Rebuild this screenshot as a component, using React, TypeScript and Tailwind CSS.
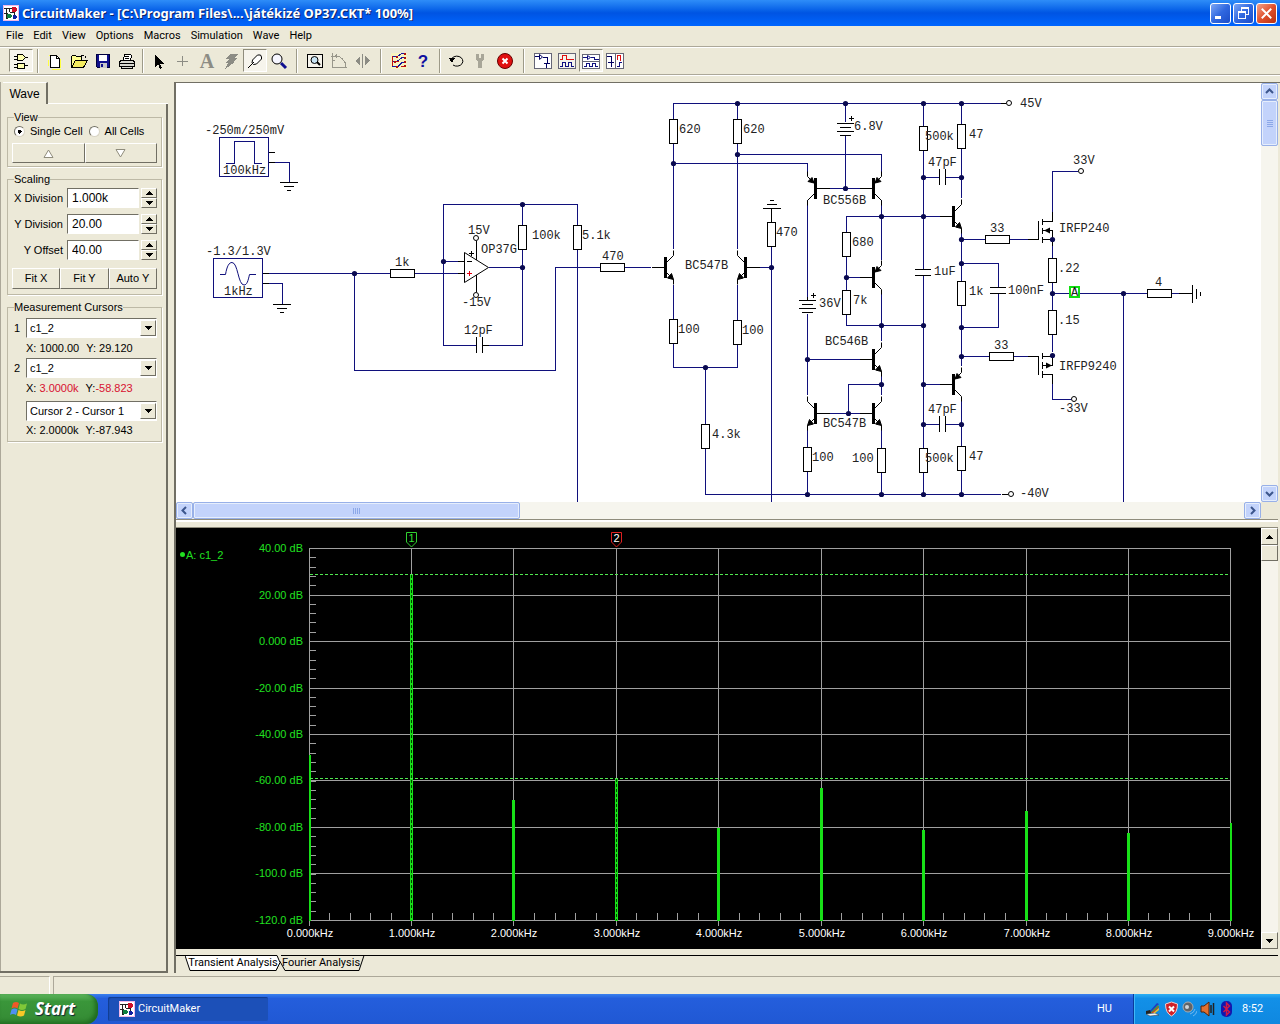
import { useState } from 'react';
import type { ReactNode } from 'react';
import clsx from 'clsx';

const UI_FONT = "font-['Liberation_Sans',Arial,sans-serif]";
const MENU_FONT = "font-['Roboto','Noto_Sans',sans-serif]";

const MENU = ['File', 'Edit', 'View', 'Options', 'Macros', 'Simulation', 'Wave', 'Help'];

function AppIcon() {
  return (
    <svg width="16" height="16" viewBox="0 0 16 16" shapeRendering="crispEdges" aria-hidden="true">
      <rect width="16" height="16" fill="#f0b8e8" />
      <rect x="1" y="1" width="14" height="14" fill="#fff" />
      <path d="M1 3.500h8M3.500 3v10M1 8.500h4M6.500 4v3M3 13.500h2" stroke="#222" fill="none" />
      <path d="M9 2h4v1h1v3h-1v1H9z" fill="#d0102a" />
      <path d="M4 9h4v1h1v2H8v1H4z" fill="#108040" />
      <path d="M10 10h3v1h1v2h-1v1h-3z" fill="#1020a0" />
      <path d="M11.500 7v3M7 7.500h4" stroke="#222" />
    </svg>
  );
}

function TitleBar() {
  return (
    <header className="flex h-[26px] items-center bg-gradient-to-b from-[#2e8df8] via-[#0054e3] to-[#0066ff] px-[3px]">
      <AppIcon />
      <h1 className="ml-[3px] flex-1 truncate font-['Noto_Sans','Open_Sans',sans-serif] text-[13px] leading-4 font-bold text-white [text-shadow:1px_1px_0_#0a246a]">
        CircuitMaker - [C:\Program Files\...\játékizé OP37.CKT* 100%]
      </h1>
      <div className="flex gap-[2px]">
        <CaptionButton label="Minimize">
          <path d="M4 13h7v3H4z" fill="#fff" />
        </CaptionButton>
        <CaptionButton label="Restore">
          <path d="M7.500 8V4.500h8v7H13M4.500 8.500h8v7h-8z" stroke="#fff" fill="none" />
          <path d="M7 4.500h9M4 8.500h9" stroke="#fff" strokeWidth="2" />
        </CaptionButton>
        <CaptionButton label="Close" close>
          <path d="M5 5l10 10M15 5L5 15" stroke="#fff" strokeWidth="2" shapeRendering="auto" />
        </CaptionButton>
      </div>
    </header>
  );
}

function CaptionButton({ label, close, children }: { label: string; close?: boolean; children: ReactNode }) {
  return (
    <button
      aria-label={label}
      className={clsx(
        'h-[21px] w-[21px] rounded-[3px] border border-white bg-gradient-to-br',
        close ? 'from-[#f0a088] via-[#e0502c] to-[#b83010]' : 'from-[#7da6f4] via-[#3068e0] to-[#1c4cc8]'
      )}
    >
      <svg viewBox="0 0 20 20" className="h-full w-full" shapeRendering="crispEdges">
        {children}
      </svg>
    </button>
  );
}

function ToolButton({ label, pressed, children }: { label: string; pressed?: boolean; children: ReactNode }) {
  return (
    <button
      aria-label={label}
      title={label}
      className={clsx(
        'flex h-[23px] w-6 items-center justify-center border',
        pressed ? 'border-t-[#8f8c7c] border-l-[#8f8c7c] border-r-white border-b-white bg-[#f6f4ec]' : 'border-transparent'
      )}
    >
      <svg width="18" height="18" viewBox="0 0 18 18" fill="none" stroke="#000" shapeRendering="crispEdges">
        {children}
      </svg>
    </button>
  );
}

function Separator({ className }: { className: string }) {
  return <div className={clsx('h-6 w-[2px] border-l border-[#9d9a88] bg-white', className)} />;
}

function Toolbar() {
  return (
    <div role="toolbar" className="flex h-[29px] items-center border-y border-[#aca899] pl-[9px] shadow-[inset_0_1px_0_#fff,0_1px_0_#fff]">
      <ToolButton label="Digital options" pressed>
        <path d="M5.500 2.500h5l3 3-3 3h-5zM5.500 11.500h7v5h-7z" fill="#ffffb0" />
        <path d="M2 4.500h3M2 7.500h3M13 5.500h3M2 12.500h3M2 15.500h3M13 13.500h3" />
      </ToolButton>
      <Separator className="mx-1" />
      <ToolButton label="New">
        <path d="M3 3h3M2 8v6M14 7v9M6 17h9" stroke="#ffff40" />
        <path d="M4.500 3.500h6l3 3v9h-9z" fill="#fff" />
        <path d="M10.500 3.500v3h3" />
      </ToolButton>
      <ToolButton label="Open">
        <path d="M1.500 15.500v-11l1-1h3l1 1h5v3" fill="#ffff90" />
        <path d="M1.500 15.500l4-7h12l-4 7z" fill="#f4ec60" />
        <path d="M11 3.500h3M15.500 4v2" />
      </ToolButton>
      <ToolButton label="Save">
        <path d="M2.500 2.500h13v13h-12l-1-1z" fill="#10108c" stroke="#000040" />
        <path d="M5 3h8v6H5z" fill="#fff" stroke="none" />
        <path d="M6 11h7v5H6z" fill="#c8c8c8" stroke="none" />
        <path d="M7 12h2v3H7z" fill="#10108c" stroke="none" />
      </ToolButton>
      <ToolButton label="Print">
        <path d="M5.500 8.500l1-6h6l1 1-1 5z" fill="#fff" />
        <path d="M1.500 9.500l2-1h11l2 1v5h-15zM3.500 14.500h11v2h-11z" fill="#d8d8d0" />
        <path d="M2 11.500h14M7 4.500h4M7 6.500h4" />
      </ToolButton>
      <Separator className="mx-[3px]" />
      <ToolButton label="Arrow">
        <path d="M5 2v13l3-3 2 5 2-1-2-4h4z" fill="#000" stroke="none" />
      </ToolButton>
      <ToolButton label="Wire">
        <path d="M8.500 4v10M3 9.500h11" stroke="#8c8c84" />
      </ToolButton>
      <button
        aria-label="Text"
        title="Text"
        className="flex h-[23px] w-6 items-center justify-center font-['Liberation_Serif',serif] text-[20px] leading-[22px] font-bold text-[#8c8c84]"
      >
        A
      </button>
      <ToolButton label="Delete">
        <path d="M8 2h8l-4 4h3l-4 4h2l-10 7 3-6H4l3-4H4z" fill="#8c8c84" stroke="none" />
      </ToolButton>
      <ToolButton label="Probe" pressed>
        <path d="M2 16l6-6M6.500 8l5-5h3l1 2v2l-5 5-3 .5-1.500-1.500z" shapeRendering="auto" fill="#fff" />
      </ToolButton>
      <ToolButton label="Zoom">
        <circle cx="7" cy="7" r="5" fill="#f6f6ff" shapeRendering="auto" />
        <path d="M11 11l5 5" stroke="#101090" strokeWidth="3" shapeRendering="auto" />
      </ToolButton>
      <Separator className="mx-[5px]" />
      <ToolButton label="Fit">
        <path d="M1.500 2.500h15v13h-15z" fill="#f6f4ec" />
        <circle cx="8.500" cy="8" r="3.500" fill="#c8e4f4" shapeRendering="auto" />
        <path d="M11 10l3 3" strokeWidth="2" shapeRendering="auto" />
      </ToolButton>
      <ToolButton label="Rotate">
        <path d="M2.500 1v14.500H17M1 4.500h4M5 8.500H2M6 4.500h3l3 2 3 4v5" stroke="#98968a" />
        <path d="M7 1v6L4 4z" fill="#98968a" stroke="none" />
      </ToolButton>
      <ToolButton label="Mirror">
        <path d="M8.500 2v14" stroke="#8c8c84" />
        <path d="M6 4v9L1 9zM11 4v9l5-4z" fill="#8c8c84" stroke="none" />
      </ToolButton>
      <Separator className="mx-[5px]" />
      <ToolButton label="Check wiring">
        <path d="M1 1h16v16H1z" fill="#f8f4c0" stroke="none" />
        <path d="M2 4.500h5l5-3h4M2 9.500h5l5-4h4M2 14.500h6l4-4h4" stroke="#1818a0" />
        <path d="M2.500 4v10M6 9.500h3M11 14.500h5" stroke="#c01010" />
        <path d="M14 1h2v2h-2zM14 5h2v2h-2zM14 9h2v2h-2zM14 13h2v2h-2zM6 4h2v2H6zM4 9h2v2H4zM6 14h2v2H6z" fill="#b01010" stroke="none" />
      </ToolButton>
      <ToolButton label="Help">
        <text x="9" y="15" textAnchor="middle" fontSize="17" fontWeight="bold" fill="#1010a0" stroke="none" className="font-['Liberation_Sans',sans-serif]">?</text>
      </ToolButton>
      <Separator className="mx-1" />
      <ToolButton label="Reset">
        <path d="M3 8a6 5 0 1 1 2 5" shapeRendering="auto" />
        <path d="M1 6h6l-3 5z" fill="#000" stroke="none" />
      </ToolButton>
      <ToolButton label="Step">
        <path d="M4 2h3v4h2V2h3v5l-2 3v6H6v-6L4 7z" fill="#a8a698" stroke="none" />
      </ToolButton>
      <ToolButton label="Stop">
        <circle cx="9" cy="9" r="7.500" fill="#e01010" stroke="#600" shapeRendering="auto" />
        <path d="M6.500 6.500l5 5M11.500 6.500l-5 5" stroke="#fff" strokeWidth="2" shapeRendering="auto" />
      </ToolButton>
      <Separator className="mx-[6px]" />
      <ToolButton label="Schematic only">
        <path d="M.5 1.500h17v15H.5z" fill="#fff" stroke="#667" />
        <path d="M1 4.500h5M9 5.500h4v5M10 11.500h6M12.500 12v4" stroke="#000060" />
        <path d="M5.500 2.500v5l3-2.500z" stroke="#000060" shapeRendering="auto" />
      </ToolButton>
      <ToolButton label="Waveforms only">
        <path d="M.5 1.500h17v15H.5z" fill="#f4f4ec" stroke="#667" />
        <path d="M2 7.500h2.500v-4h4v4H16" stroke="#e01010" />
        <path d="M2 14.500h2.500v-4h3v4h3v-4h3v4H16" stroke="#101080" />
      </ToolButton>
      <ToolButton label="Split horizontally" pressed>
        <path d="M.5 2.500h17v14H.5zM1 9.500h16" fill="#fff" stroke="#667" />
        <path d="M1 5.500h5M9 5.500h3.500v2H17M2 14.500h2.500v-3h3v3h3v-3h3v3H16" stroke="#101080" />
        <path d="M5.500 3.500v4l3-2z" stroke="#101080" shapeRendering="auto" />
      </ToolButton>
      <ToolButton label="Split vertically">
        <path d="M.5 1.500h17v15H.5zM9.500 2v14" fill="#fff" stroke="#667" />
        <path d="M1 4.500h4.500v5M2 10.500h6M5.500 11v4" stroke="#000060" />
        <path d="M11 7.500h.5v-4h3v5" stroke="#e01010" />
        <path d="M11 14.500h2.500v-4H16" stroke="#101080" />
      </ToolButton>
    </div>
  );
}

const RAISED = 'border border-t-white border-l-white border-r-[#716f64] border-b-[#716f64] bg-[#ece9d8]';
const SUNKEN = 'border-t border-l border-r border-b border-t-[#716f64] border-l-[#716f64] border-r-white border-b-white bg-white';

function Group({ title, children }: { title: string; children: ReactNode }) {
  return (
    <fieldset className="mr-1 mb-[6px] ml-[7px] min-w-0 border border-[#bdb9a6] px-1 shadow-[1px_1px_0_#fff]">
      <legend className="ml-[2px] leading-3">{title}</legend>
      {children}
    </fieldset>
  );
}

function Arrow({ up }: { up?: boolean }) {
  return (
    <svg width="7" height="4" viewBox="0 0 7 4" shapeRendering="crispEdges" aria-hidden="true">
      <path d={up ? 'M3 0h1l3 4H0z' : 'M0 0h7L4 4H3z'} />
    </svg>
  );
}

function NumberRow({ id, label, value }: { id: string; label: string; value: string }) {
  return (
    <div className="mb-[6px] flex h-5 items-center">
      <label htmlFor={id} className="w-[55px] shrink-0 pr-1 text-right whitespace-nowrap">
        {label}
      </label>
      <input id={id} defaultValue={value} className={clsx('h-5 w-0 min-w-0 flex-1 pl-1 text-[12px]', SUNKEN)} />
      <div className="ml-[2px] flex w-4 shrink-0 flex-col">
        <button aria-label={`${label} up`} className={clsx('flex h-[10px] items-center justify-center', RAISED)}>
          <Arrow up />
        </button>
        <button aria-label={`${label} down`} className={clsx('flex h-[10px] items-center justify-center', RAISED)}>
          <Arrow />
        </button>
      </div>
    </div>
  );
}

function CursorSelect({ label, options }: { label: string; options: string[] }) {
  return (
    <div className="relative ml-[14px]">
      <select aria-label={label} className={clsx('block h-5 w-full appearance-none pl-[3px]', SUNKEN)}>
        {options.map((o) => (
          <option key={o}>{o}</option>
        ))}
      </select>
      <span className={clsx('pointer-events-none absolute top-[2px] right-[1px] flex h-4 w-4 items-center justify-center', RAISED)}>
        <Arrow />
      </span>
    </div>
  );
}

function WavePanel() {
  const [cell, setCell] = useState('single');
  return (
    <aside className="flex w-[168px] shrink-0 flex-col border-l border-[#aca899] text-[11px]">
      <div className="flex h-[22px] pl-[2px]">
        <button className="w-[45px] border-t border-r-2 border-t-white border-r-[#716f64] text-[12px]">Wave</button>
        <div className="flex-1 border-b border-white" />
      </div>
      <div className="-ml-px flex-1 border-r-2 border-b-2 border-[#716f64] pt-[7px]">
        <Group title="View">
          <div className="flex h-4 items-center">
            {[
              ['single', 'Single Cell'],
              ['all', 'All Cells'],
            ].map(([id, text]) => (
              <label key={id} className="mr-1 flex items-center gap-[5px] pl-[2px] whitespace-nowrap">
                <input
                  type="radio"
                  name="cell"
                  checked={cell === id}
                  onChange={() => setCell(id)}
                  className="h-[11px] w-[11px] appearance-none rounded-full border border-t-[#716f64] border-r-[#d8d4c4] border-b-[#d8d4c4] border-l-[#716f64] bg-white checked:bg-[radial-gradient(circle,#000_2px,#fff_2px)]"
                />
                {text}
              </label>
            ))}
          </div>
          <div className="mt-1 mb-[3px] flex h-5">
            <button aria-label="Previous cell" className={clsx('flex flex-1 items-center justify-center', RAISED)}>
              <svg width="11" height="9" viewBox="0 0 11 9" fill="#fff" stroke="#8f8c7c">
                <path d="M5.500 1l4.500 7.500H1z" />
              </svg>
            </button>
            <button aria-label="Next cell" className={clsx('flex flex-1 items-center justify-center', RAISED)}>
              <svg width="11" height="9" viewBox="0 0 11 9" fill="#fff" stroke="#8f8c7c">
                <path d="M5.500 8L1 .5h9z" />
              </svg>
            </button>
          </div>
        </Group>
        <Group title="Scaling">
          <div className="pt-[3px]">
            <NumberRow id="xdiv" label="X Division" value="1.000k" />
            <NumberRow id="ydiv" label="Y Division" value="20.00" />
            <NumberRow id="yoff" label="Y Offset" value="40.00" />
          </div>
          <div className="mt-2 mb-[5px] flex h-[21px]">
            {['Fit X', 'Fit Y', 'Auto Y'].map((t) => (
              <button key={t} className={clsx('flex-1', RAISED)}>
                {t}
              </button>
            ))}
          </div>
        </Group>
        <Group title="Measurement Cursors">
          <div className="relative pt-[5px]">
            <span className="absolute top-[7px] left-[2px]">1</span>
            <CursorSelect label="Cursor 1 trace" options={['c1_2']} />
            <p className="ml-[14px] flex h-5 items-center gap-[7px] whitespace-nowrap">
              <span>X: 1000.00</span>
              <span>Y: 29.120</span>
            </p>
          </div>
          <div className="relative">
            <span className="absolute top-[2px] left-[2px]">2</span>
            <CursorSelect label="Cursor 2 trace" options={['c1_2']} />
            <p className="ml-[14px] flex h-5 items-center gap-[7px] whitespace-nowrap">
              <span>
                X: <span className="text-[#d81030]">3.0000k</span>
              </span>
              <span>
                Y:<span className="text-[#d81030]">-58.823</span>
              </span>
            </p>
          </div>
          <div className="pt-[3px] pb-[2px]">
            <CursorSelect label="Difference" options={['Cursor 2 - Cursor 1', 'Cursor 1 - Cursor 2']} />
            <p className="ml-[14px] flex h-[18px] items-center gap-[7px] whitespace-nowrap">
              <span>X: 2.0000k</span>
              <span>Y:-87.943</span>
            </p>
          </div>
        </Group>
      </div>
    </aside>
  );
}

/* ---------- schematic ---------- */

const WIRES = [
  'M275 162.500H289.500V182',
  'M269 283.500H282.500V304',
  'M269 273.500H390M415 273.500H458',
  'M354.500 273.500V370.500H555.500V267.500H600',
  'M476 345.500H443.500V204.500H577.500V225M577.500 250V502',
  'M443.500 261.500H458M522.500 204.500V225M522.500 250V345.500H489M489 267.500H522.500',
  'M673.500 119V103.500H1002M737.500 103.500V119M845.500 103.500V122',
  'M673.500 144V249M737.500 144V249M673.500 163.500H807.500V176M737.500 154.500H881.500V176',
  'M625 267.500H651M752 267.500H771.500M771.500 247V502',
  'M673.500 285V319M737.500 285V320M673.500 344V367.500H737.500V345M705.500 367.500V424M705.500 449V494.500H1001',
  'M845.500 136V188.500M822 188.500H866M881.500 200V260M846.500 232V216.500H952M846.500 257V290M846.500 277.500H872M846.500 315V325.500H923.500',
  'M807.500 200V297M807.500 314V395M807.500 359.500H872M881.500 290V341M881.500 372V395M881.500 384.500H848.500V413.500M830 413.500H866',
  'M807.500 426V447M807.500 472V494M881.500 426V448M881.500 473V494',
  'M923.500 103V126M923.500 151V269M923.500 276V448M923.500 473V494',
  'M961.500 103V124M961.500 149V198M923.500 177.500H939M946 177.500H961',
  'M961.500 229V281M961.500 306V366M961.500 397V446M961.500 471V494',
  'M961.500 239.500H985M1010 239.500H1028M961.500 263.500H998.500V287M998.500 294V327.500H961.500',
  'M961.500 356.500H989M1014 356.500H1028M923.500 384.500H952M923.500 424.500H939M946 424.500H961',
  'M1052.500 212V171.500H1078M1052.500 244V258M1052.500 283V310M1052.500 335V352M1052.500 384V399.500H1071',
  'M1052.500 293.500H1147M1172 293.500H1179M1123.500 293.500V502',
].join('');

const LEADS = [
  'M269 152.500h6M269 162.500h6M280 182.500h18M284 186.500h10M287 190.500h4',
  'M262 273.500h7M262 283.500h7M273 304.500h18M277 308.500h10M280 312.500h4',
  'M458 261.500h6M458 273.500h6M476.500 241V260M476.500 275V292',
  'M476.500 337v16M482.500 337v16M483 345.500h6',
  'M763 208.500h18M767 204.500h10M770 200.500h4M771.500 208v14',
  'M837 123.500h17M840 127.500h11M837 131.500h17M840 135.500h11',
  'M799 300.500h17M802 304.500h11M799 308.500h17M802 312.500h11M807.500 297v3',
  'M939.500 169v16M945.500 169v16M939.500 416v16M945.500 416v16',
  'M915 269.500h16M915 275.500h16M990 287.500h16M990 293.500h16',
  'M1028 239.500h10.500V221M1042.500 219v6M1042.500 228v6M1042.500 237v6M1042 221.500h10.500V212M1043 230.500h9.500V239.500H1042M1052.500 240v6',
  'M1028 356.500h10.500V375M1042.500 353v6M1042.500 362v7M1042.500 371v7M1042 356.500h10.500V365.500H1043M1042 374.500h10.500V384',
  'M1179 293.500h13M1192.500 285v18M1196.500 289v10M1200.500 292v4',
  'M1001 103.500h5M1002 494.500h6',
  'M849 118.500h5M851.500 116v5M811 295.500h5M813.500 293v5M469 253.500h5M471.500 251v5M467 261.500h5',
].join('');

// top-left corners
const RES_V = [
  [518, 225], [573, 225], [669, 119], [733, 119], [767, 222], [669, 319], [733, 320], [701, 424], [842, 232],
  [842, 290], [803, 447], [877, 448], [919, 126], [957, 124], [957, 281], [919, 448], [957, 446], [1048, 258], [1048, 310],
];
const RES_H = [[390, 269], [600, 263], [985, 235], [989, 352], [1147, 289]];

const DOTS = [
  [354, 273], [443, 261], [522, 204], [522, 267], [737, 103], [845, 103], [923, 103], [961, 103], [673, 163],
  [737, 154], [771, 267], [705, 367], [845, 188], [881, 216], [846, 277], [881, 325], [923, 325], [807, 359],
  [881, 384], [848, 413], [923, 177], [961, 177], [923, 216], [961, 239], [961, 263], [961, 327], [961, 356],
  [923, 384], [923, 424], [961, 424], [807, 494], [881, 494], [923, 494], [961, 494], [1052, 239], [1052, 293],
  [1052, 355], [1123, 293],
];

const TERMINALS = [[475, 237], [475, 294], [1008, 102], [1010, 493], [1080, 170], [1073, 398]];

const LABELS: [number, number, string][] = [
  [205, 134, '-250m/250mV'], [223, 174, '100kHz'], [206, 255, '-1.3/1.3V'], [224, 295, '1kHz'], [395, 266, '1k'],
  [468, 234, '15V'], [462, 306, '-15V'], [481, 253, 'OP37G'], [532, 239, '100k'], [582, 239, '5.1k'], [464, 334, '12pF'],
  [602, 260, '470'], [679, 133, '620'], [743, 133, '620'], [776, 236, '470'], [685, 269, 'BC547B'], [678, 333, '100'],
  [742, 334, '100'], [712, 438, '4.3k'], [854, 130, '6.8V'], [823, 204, 'BC556B'], [852, 246, '680'], [853, 304, '7k'],
  [819, 307, '36V'], [825, 345, 'BC546B'], [823, 427, 'BC547B'], [812, 461, '100'], [852, 462, '100'], [925, 140, '500k'],
  [969, 138, '47'], [928, 166, '47pF'], [934, 275, '1uF'], [969, 295, '1k'], [1008, 294, '100nF'], [990, 232, '33'],
  [1059, 232, 'IRFP240'], [1058, 272, '.22'], [1058, 324, '.15'], [1155, 286, '4'], [1073, 164, '33V'], [1020, 107, '45V'],
  [994, 349, '33'], [1059, 370, 'IRFP9240'], [1059, 412, '-33V'], [928, 413, '47pF'], [925, 462, '500k'], [969, 460, '47'],
  [1020, 497, '-40V'],
];

// x is the collector/emitter column, side says where the base bar sits
function Transistor({ x, y, side, pnp }: { x: number; y: number; side: -1 | 1; pnp?: boolean }) {
  return (
    <g transform={`translate(${x + 0.5} ${y + 0.5}) scale(${side === -1 ? 1 : -1} 1)`} stroke="#000" fill="none">
      <path d="M-8 -10.500V10.500" strokeWidth="3" shapeRendering="crispEdges" />
      <path d="M-22 0H-9" shapeRendering="crispEdges" />
      <path d="M-7 -5L0 -12V-17M-7 5L0 12V17" />
      {pnp ? <path d="M-6.500 -5.500l2 -5.500 4 4z" fill="#000" /> : <path d="M0 12l-6 -1.500 4 -4.500z" fill="#000" />}
    </g>
  );
}

function Schematic() {
  return (
    <svg viewBox="176 83 1085 419" className="block h-auto w-full bg-white font-['Liberation_Mono',monospace]" fontSize="12" fill="none" role="img" aria-label="Amplifier schematic">
      <g shapeRendering="crispEdges">
        <path d={WIRES} stroke="#10107c" />
        <path d={LEADS} stroke="#000" />
        <path d="M219.500 137.500h49v39h-49zM226 163.500h8.500v-22h20v22H262M213.500 258.500h49v39h-49z" stroke="#10107c" />
        {RES_V.map(([x, y]) => (
          <rect key={`${x}-${y}`} x={x + 0.5} y={y + 0.5} width="8" height="24" fill="#fff" stroke="#000" />
        ))}
        {RES_H.map(([x, y]) => (
          <rect key={`${x}-${y}`} x={x + 0.5} y={y + 0.5} width="24" height="8" fill="#fff" stroke="#000" />
        ))}
        <path d="M467 273.500h5M469.500 271v5" stroke="#e00010" />
      </g>
      <path d="M220 274.500h5.500C227 266 229 262.500 232 262.500c6 0 6 22.500 12 22.500 3 0 4-4 5.500-10.500H256" stroke="#10107c" />
      <path d="M464.500 252.500v30l24-15z" stroke="#000" />
      <path d="M1044 230.500l6-3v6zM1052 365.500l-6-3v6z" fill="#000" />
      {DOTS.map(([x, y]) => (
        <circle key={`${x}-${y}`} cx={x + 0.5} cy={y + 0.5} r="2.600" fill="#0a0a50" />
      ))}
      {TERMINALS.map(([x, y]) => (
        <circle key={`${x}-${y}`} cx={x + 1} cy={y + 1} r="2.500" fill="#fff" stroke="#000" />
      ))}
      <Transistor x={673} y={267} side={-1} />
      <Transistor x={737} y={267} side={1} />
      <Transistor x={807} y={188} side={1} pnp />
      <Transistor x={881} y={188} side={-1} pnp />
      <Transistor x={881} y={277} side={-1} pnp />
      <Transistor x={881} y={359} side={-1} />
      <Transistor x={807} y={413} side={1} />
      <Transistor x={881} y={413} side={-1} />
      <Transistor x={961} y={216} side={-1} />
      <Transistor x={961} y={384} side={-1} pnp />
      <g fill="#222">
        {LABELS.map(([x, y, text]) => (
          <text key={`${x}-${y}`} x={x} y={y}>
            {text}
          </text>
        ))}
        <rect x="1070" y="287" width="9" height="10" fill="#fff" stroke="#10e010" strokeWidth="2" shapeRendering="crispEdges" />
        <text x="1071" y="296">A</text>
      </g>
    </svg>
  );
}

/* ---------- spectrum plot ---------- */

const GRID_X = [309, 411, 513, 616, 718, 821, 923, 1026, 1128, 1230];
const GRID_Y = [548, 595, 641, 688, 734, 780, 827, 873, 920];

const DB = ['40.00', '20.00', '0.000', '-20.00', '-40.00', '-60.00', '-80.00', '-100.0', '-120.0'];
// top of each harmonic line
const PEAKS = [755, 574, 800, 779, 828, 788, 830, 811, 833, 823];

function Marker({ x, n, color, textColor }: { x: number; n: number; color: string; textColor: string }) {
  return (
    <g>
      <path d={`M${x - 5} 532.5h10v9.500l-5 5l-5 -5z`} stroke={color} fill="#000" />
      <text x={x} y="542" textAnchor="middle" fill={textColor}>
        {n}
      </text>
    </g>
  );
}

function Plot() {
  return (
    <svg viewBox="176 528 1085 421" className="block h-auto w-full bg-black font-['Liberation_Sans',Arial,sans-serif]" fontSize="11" fill="none" role="img" aria-label="Fourier spectrum of c1_2">
      <g shapeRendering="crispEdges" stroke="#a0a0a0">
        {GRID_Y.map((y) => (
          <path key={y} d={`M309 ${y + 0.5}H1231`} />
        ))}
        {GRID_X.map((x) => (
          <path key={x} d={`M${x + 0.5} 548V926`} />
        ))}
        {Array.from({ length: 40 }, (_, i) => (
          <path key={i} d={`M310 ${Math.floor(548.500 + i * 9.3) + 0.5}h6`} />
        ))}
        {Array.from({ length: 45 }, (_, i) => (
          <path key={i} d={`M${Math.floor(309.500 + i * 20.4667) + 0.5} 920v-7`} />
        ))}
        {PEAKS.map((y, i) => (
          <path key={y} d={`M${GRID_X[i] + 0.5} ${y}V921`} stroke="#18e018" strokeWidth={i === 0 || i === 9 ? 2 : 3} />
        ))}
        <path d="M411.500 575V920M616.500 779V920" stroke="#004000" strokeDasharray="3 2" />
        <path d="M310 574.500H1230M310 778.500H1230" stroke="#50e850" strokeDasharray="3 2" />
      </g>
      <Marker x={411.5} n={1} color="#30d030" textColor="#30e030" />
      <Marker x={616.5} n={2} color="#e02020" textColor="#fff" />
      <g fill="#20e020">
        <circle cx="182.500" cy="554.500" r="2.500" />
        <text x="186" y="559">A: c1_2</text>
        {DB.map((v, i) => (
          <text key={v} x="303" y={GRID_Y[i] + 4} textAnchor="end">
            {v} dB
          </text>
        ))}
      </g>
      <g fill="#fff">
        {GRID_X.map((x, i) => (
          <text key={x} x={x + 1} y="937" textAnchor="middle">
            {i}.000kHz
          </text>
        ))}
      </g>
    </svg>
  );
}

/* ---------- scroll bars ---------- */

const XP_THUMB = 'rounded-[2px] border border-[#98b0e8] bg-[#c3d3fb] shadow-[inset_0_0_0_1px_#e6eefc]';

function XpArrow({ label, d }: { label: string; d: string }) {
  return (
    <button aria-label={label} className={clsx('h-[17px] w-[17px] shrink-0', XP_THUMB)}>
      <svg viewBox="0 0 15 15" className="h-full w-full" fill="none" stroke="#3c568c" strokeWidth="2">
        <path d={d} />
      </svg>
    </button>
  );
}

function ClassicArrow({ label, up }: { label: string; up?: boolean }) {
  return (
    <button aria-label={label} className={clsx('flex h-[17px] items-center justify-center', RAISED)}>
      <Arrow up={up} />
    </button>
  );
}

function Workspace() {
  return (
    <main className="flex min-w-0 flex-1 flex-col border-t border-l-2 border-[#716f64] pr-[2px]">
      <div className="flex">
        <div className="min-w-0 flex-1">
          <Schematic />
        </div>
        <div className="flex w-[17px] shrink-0 flex-col bg-[#f6f5ee]">
          <XpArrow label="Scroll up" d="M4 9l3.500-3.500L11 9" />
          <div className={clsx('flex h-[46px] flex-col items-center justify-center gap-px', XP_THUMB)}>
            {[0, 1, 2, 3].map((i) => (
              <span key={i} className="h-px w-[6px] border-b border-[#8ca8e8]" />
            ))}
          </div>
          <div className="flex-1" />
          <XpArrow label="Scroll down" d="M4 6l3.500 3.500L11 6" />
        </div>
      </div>
      <div className="flex h-[17px] bg-[#f6f5ee]">
        <XpArrow label="Scroll left" d="M9 4L5.500 7.500 9 11" />
        <div className={clsx('flex w-[327px] items-center justify-center gap-px', XP_THUMB)}>
          {[0, 1, 2, 3].map((i) => (
            <span key={i} className="h-[6px] w-px border-r border-[#8ca8e8]" />
          ))}
        </div>
        <div className="flex-1" />
        <XpArrow label="Scroll right" d="M6 4l3.500 3.500L6 11" />
        <div className="w-[17px] bg-[#ece9d8]" />
      </div>
      <div className="h-[9px] border-t border-b border-[#8f8c7c] shadow-[inset_0_2px_0_#fff]" />
      <div className="flex">
        <div className="min-w-0 flex-1">
          <Plot />
        </div>
        <div className="flex w-[17px] shrink-0 flex-col bg-[#f6f4ec]">
          <ClassicArrow label="Scroll plot up" up />
          <div className={clsx('h-4', RAISED)} />
          <div className="flex-1" />
          <ClassicArrow label="Scroll plot down" />
        </div>
      </div>
      <div className="flex h-6 pt-[6px]">
        <div className="w-[9px] border-t border-black" />
        <div role="tablist" className={clsx('relative flex h-4 w-[180px] text-[11px] whitespace-nowrap', MENU_FONT)}>
          <svg className="absolute inset-0" width="180" height="16" viewBox="0 0 180 16" stroke="#000" aria-hidden="true">
            <path d="M96 .5h84" />
            <path d="M91 15.500l4-9 5 9h74l5-15H96" fill="#ece9d8" />
            <path d="M0 .5l5 15h86l4-8-3-7z" fill="#fff" />
          </svg>
          <button role="tab" aria-selected="true" className="relative w-24">
            Transient Analysis
          </button>
          <button role="tab" aria-selected="false" className="relative w-20">
            Fourier Analysis
          </button>
        </div>
        <div className="flex-1 border-t border-black" />
      </div>
    </main>
  );
}

function Taskbar() {
  return (
    <footer className={clsx('flex h-[30px] items-stretch bg-gradient-to-b from-[#3a80ee] via-[#245edc] via-15% to-[#2058d4] text-[11px] text-white', MENU_FONT)}>
      <button className="flex w-[98px] items-center gap-[6px] rounded-r-xl bg-gradient-to-b from-[#5fb85f] via-[#3a963a] via-25% to-[#348a34] pl-[10px] shadow-[inset_-3px_-2px_4px_#1f6a1f] [text-shadow:1px_1px_1px_#123]">
        <svg width="19" height="18" viewBox="0 0 19 18" aria-hidden="true">
          <path d="M3 3q3-2 6 0l-1.500 5.500q-3-2-6 0z" fill="#f05828" />
          <path d="M10 3.500q3 2 7 0L15.500 9q-3.500 2-7 0z" fill="#80c838" />
          <path d="M1.500 9.500q3-2 6 0L6 15q-3-2-6 0z" fill="#5090f0" />
          <path d="M8.500 10q3.500 2 7 0L14 15.500q-3.500 2-7 0z" fill="#f8c828" />
        </svg>
        <span className="font-['Open_Sans',sans-serif] text-[17px] leading-5 font-bold italic">Start</span>
      </button>
      <button className="my-[3px] ml-[10px] flex w-40 items-center gap-[3px] rounded-[2px] bg-[#1c50b8] pl-[11px] shadow-[inset_1px_1px_1px_#123c90]">
        <AppIcon />
        CircuitMaker
      </button>
      <div className="flex-1" />
      <span className="mr-[21px] self-center">HU</span>
      <div className="flex w-[147px] items-center gap-[3px] border-l border-[#0a3a9c] bg-gradient-to-b from-[#2cb0f4] via-[#1290e8] via-15% to-[#0f88e0] pl-[11px] shadow-[inset_1px_0_0_#40b8f8]">
        <svg width="16" height="16" viewBox="0 0 16 16" aria-hidden="true">
          <path d="M1 13l9-1 4 2-9 1z" fill="#f4f4f4" stroke="#333" strokeWidth=".5" />
          <path d="M3 12l9-10 2 1-8 9z" fill="#2040c0" />
          <path d="M5 12l8-8 1 2-6 6z" fill="#30b040" />
          <path d="M6 12l8-7v1l-6 6z" fill="#e03020" />
          <path d="M8 12l6-5v2l-4 3z" fill="#f0c020" />
          <path d="M1 10l4-1 1 3-5 1z" fill="#222" />
        </svg>
        <svg width="15" height="16" viewBox="0 0 15 16" aria-hidden="true">
          <path d="M7.500 1l6 2q0 9-6 12-6-3-6-12z" fill="#d02028" stroke="#f0d0d0" />
          <path d="M5 5.500l5 5M10 5.500l-5 5" stroke="#fff" strokeWidth="2" />
        </svg>
        <svg width="15" height="16" viewBox="0 0 15 16" fill="none" aria-hidden="true">
          <circle cx="6" cy="6" r="5" fill="#606468" stroke="#a8acb0" />
          <circle cx="5" cy="6" r="2" fill="#d0d4d8" />
          <path d="M8 13q4-1 5-5M11 15q3-1 4-5" stroke="#70b8f0" />
        </svg>
        <svg width="16" height="16" viewBox="0 0 16 16" aria-hidden="true">
          <path d="M1 5h3l5-4v14l-5-4H1z" fill="#e07030" stroke="#502008" />
          <path d="M11 4v8M13.500 2v12" stroke="#222" strokeWidth="1.500" />
        </svg>
        <svg width="15" height="16" viewBox="0 0 15 16" fill="none" aria-hidden="true">
          <rect x="2" y="0" width="11" height="16" rx="5" fill="#1018b0" />
          <path d="M4.500 5l6 6-3 3V2l3 3-6 6" stroke="#d01848" strokeWidth="1.500" />
        </svg>
        <time className="ml-[5px]">8:52</time>
      </div>
    </footer>
  );
}

export default function App() {
  return (
    <div className={clsx('flex min-h-screen flex-col bg-[#ece9d8] text-black', UI_FONT)}>
      <TitleBar />
      <nav className={clsx('flex h-5 items-center text-[11px]', MENU_FONT)}>
        {MENU.map((m) => (
          <button key={m} className="px-[5px] first:pl-[6px]">
            {m}
          </button>
        ))}
      </nav>
      <Toolbar />
      <div className="mt-[7px] flex flex-1 gap-[6px]">
        <WavePanel />
        <Workspace />
      </div>
      <div className="flex h-[21px] gap-[3px] pt-[3px]">
        <div className="w-[50px] border-t border-r border-t-[#aca899] border-r-white" />
        <div className="flex-1 border-t border-l border-[#aca899]" />
      </div>
      <Taskbar />
    </div>
  );
}
